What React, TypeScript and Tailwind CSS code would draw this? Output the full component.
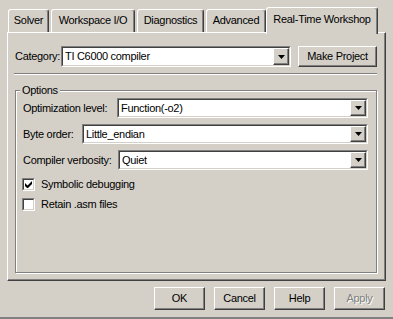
import React from "react";

const raised =
  "border border-t-white border-l-white border-r-[#404040] border-b-[#404040] shadow-[inset_-1px_-1px_0_#808080]";

function Arrow() {
  return (
    <svg width="7" height="4" viewBox="0 0 7 4" className="block">
      <path d="M0 0h7L3.5 4z" fill="#000" />
    </svg>
  );
}

function Combo({ value, w, h }: { value: string; w: number; h: number }) {
  return (
    <div
      className="border border-t-[#808080] border-l-[#808080] border-b-white border-r-white shrink-0"
      style={{ width: w, height: h }}
    >
      <div className="h-full border border-t-[#404040] border-l-[#404040] border-b-[#d4d0c8] border-r-[#d4d0c8] bg-white flex items-stretch">
        <div className="flex-1 flex items-center pl-[2px] text-black whitespace-nowrap overflow-hidden">{value}</div>
        <div className={`w-[16px] bg-[#d4d0c8] flex items-center justify-center ${raised}`}>
          <Arrow />
        </div>
      </div>
    </div>
  );
}

function Button({ label, w, h, disabled }: { label: string; w: number; h: number; disabled?: boolean }) {
  return (
    <div
      className={`bg-[#d4d0c8] flex items-center justify-center shrink-0 ${raised}`}
      style={{ width: w, height: h }}
    >
      {disabled ? (
        <span className="text-[#808080] [text-shadow:1px_1px_0_#fff]">{label}</span>
      ) : (
        <span className="text-black whitespace-nowrap">{label}</span>
      )}
    </div>
  );
}

function Check({ checked, label }: { checked: boolean; label: string }) {
  return (
    <div className="flex items-center h-[13px]">
      <div className="w-[13px] h-[13px] shrink-0 border border-t-[#808080] border-l-[#808080] border-b-white border-r-white">
        <div className="w-full h-full border border-t-[#404040] border-l-[#404040] border-b-[#d4d0c8] border-r-[#d4d0c8] bg-white flex items-center justify-center">
          {checked && (
            <svg width="7" height="7" viewBox="0 0 7 7" className="block">
              <path d="M0 2v3l2 2h1l4-4V0L2.5 4.5z" fill="#000" />
            </svg>
          )}
        </div>
      </div>
      <span className="ml-[6px] text-black whitespace-nowrap">{label}</span>
    </div>
  );
}

function Tab({ label, w, selected }: { label: string; w: number; selected?: boolean }) {
  return (
    <div
      className={`flex items-center justify-center bg-[#d4d0c8] border-l border-t border-r border-l-white border-t-white border-r-[#404040] rounded-t-[3px] shadow-[inset_-1px_0_0_#808080] shrink-0 ${
        selected ? "h-[27px] mb-[-2px] relative z-10 pb-[3px]" : "h-[23px] pb-[1px]"
      }`}
      style={{ width: w }}
    >
      <span className="whitespace-nowrap text-black">{label}</span>
    </div>
  );
}

function Label({ w, children }: { w: number; children: React.ReactNode }) {
  return (
    <div className="shrink-0 text-black whitespace-nowrap" style={{ width: w }}>
      {children}
    </div>
  );
}

export default function App() {
  return (
    <div className="w-[393px] h-[319px] bg-[#d4d0c8] flex flex-col border-b-2 border-[#808080] font-['Liberation_Sans',Arial,sans-serif] text-[11px] tracking-[-0.3px] leading-none overflow-hidden">
      <div className="mt-[7px] h-[25px] flex items-end pl-[8px] relative z-10">
        <Tab label="Solver" w={41} />
        <div className="w-[2px]" />
        <Tab label="Workspace I/O" w={84} />
        <div className="w-[2px]" />
        <Tab label="Diagnostics" w={67} />
        <div className="w-[2px]" />
        <Tab label="Advanced" w={60} />
        <Tab label="Real-Time Workshop" w={112} selected />
      </div>
      <div className={`ml-[7px] w-[379px] h-[249px] bg-[#d4d0c8] flex flex-col ${raised}`}>
        <div className="pt-[13px] pl-[7px] flex items-center">
          <Label w={46}>Category:</Label>
          <Combo value="TI C6000 compiler" w={230} h={21} />
          <div className="w-[7px]" />
          <Button label="Make Project" w={79} h={21} />
        </div>
        <div className="mt-[6px] ml-[6px] w-[363px] h-[2px] border-t border-b border-t-[#808080] border-b-white" />
        <div className="mt-[15px] ml-[7px] w-[362px] h-[183px] relative border border-[#808080] shadow-[inset_1px_1px_0_#fff,1px_1px_0_#fff] flex flex-col pt-[7px] pl-[7px]">
          <div className="absolute top-[-6px] left-[4px] px-[2px] bg-[#d4d0c8] text-black">Options</div>
          <div className="flex items-center h-[20px]">
            <Label w={94}>Optimization level:</Label>
            <Combo value="Function(-o2)" w={251} h={20} />
          </div>
          <div className="flex items-center h-[20px] mt-[6px]">
            <Label w={59}>Byte order:</Label>
            <Combo value="Little_endian" w={286} h={20} />
          </div>
          <div className="flex items-center h-[20px] mt-[6px]">
            <Label w={95}>Compiler verbosity:</Label>
            <Combo value="Quiet" w={250} h={20} />
          </div>
          <div className="mt-[8px] -ml-[1px]">
            <Check checked label="Symbolic debugging" />
          </div>
          <div className="mt-[7px] -ml-[1px]">
            <Check checked={false} label="Retain .asm files" />
          </div>
        </div>
      </div>
      <div className="mt-[6px] flex justify-end pr-[8px] gap-[9px]">
        <Button label="OK" w={51} h={23} />
        <Button label="Cancel" w={51} h={23} />
        <Button label="Help" w={51} h={23} />
        <Button label="Apply" w={51} h={23} disabled />
      </div>
    </div>
  );
}
